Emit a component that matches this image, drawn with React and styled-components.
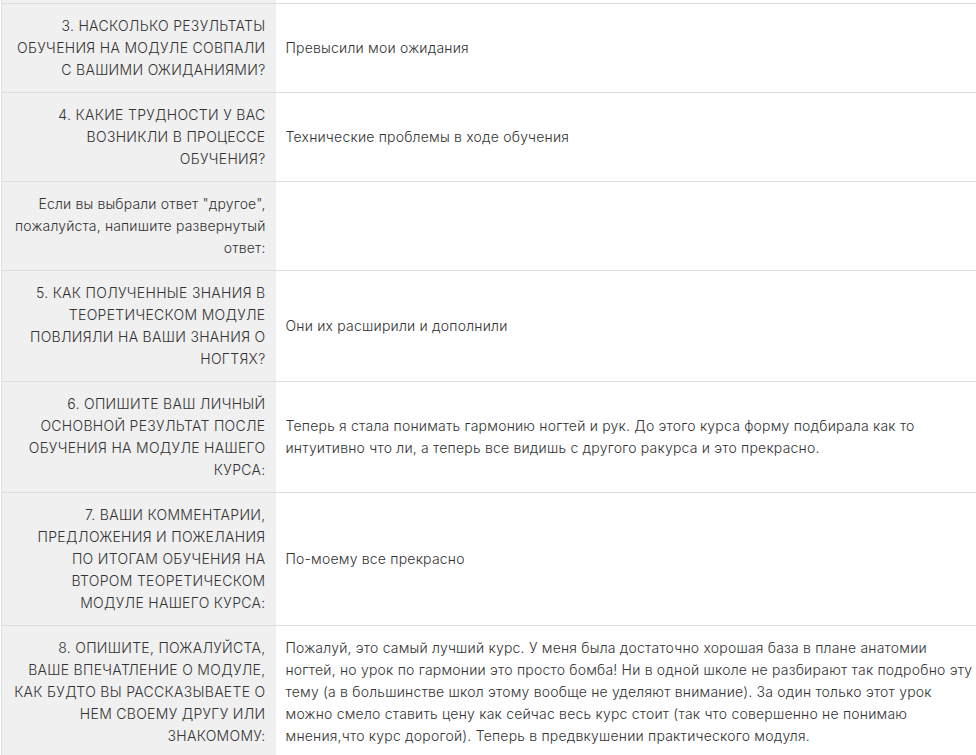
import React from 'react';
import styled, { createGlobalStyle } from 'styled-components';

const GlobalStyle = createGlobalStyle`
  html, body {
    margin: 0;
    padding: 0;
    background: #fff;
    overflow: hidden;
  }
  body {
    font-family: Inter, "Liberation Sans", sans-serif;
    color: #333;
  }
`;

const Page = styled.div`
  padding-left: 1px;
  width: 990px;
`;

const Table = styled.table`
  border-collapse: collapse;
  table-layout: fixed;
  width: 982px;
  border-left: 1px solid #dcdcdc;
  font-size: 14px;
  line-height: 22px;
  font-weight: 300;
  letter-spacing: 0.2px;
`;

const Row = styled.tr`
  border-bottom: 1px solid #dcdcdc;
`;

const Question = styled.td`
  width: 254px;
  padding: ${p => (p.$stub ? '0 10px' : '11px 10px')};
  height: ${p => (p.$stub ? '3px' : 'auto')};
  background: #f0f0f0;
  text-align: right;
  vertical-align: middle;
  letter-spacing: ${p => (p.$caps ? '0.3px' : '0.15px')};
  color: #333;
`;

const Answer = styled.td`
  padding: ${p => (p.$stub ? '0 10px' : '11px 10px')};
  vertical-align: middle;
  text-align: left;
  color: #333;
`;

const rows = [
  {
    q: ['3. НАСКОЛЬКО РЕЗУЛЬТАТЫ', 'ОБУЧЕНИЯ НА МОДУЛЕ СОВПАЛИ', 'С ВАШИМИ ОЖИДАНИЯМИ?'],
    a: 'Превысили мои ожидания',
  },
  {
    q: ['4. КАКИЕ ТРУДНОСТИ У ВАС', 'ВОЗНИКЛИ В ПРОЦЕССЕ', 'ОБУЧЕНИЯ?'],
    a: 'Технические проблемы в ходе обучения',
  },
  {
    q: ['Если вы выбрали ответ "другое",', 'пожалуйста, напишите развернутый', 'ответ:'],
    a: '',
    plain: true,
  },
  {
    q: ['5. КАК ПОЛУЧЕННЫЕ ЗНАНИЯ В', 'ТЕОРЕТИЧЕСКОМ МОДУЛЕ', 'ПОВЛИЯЛИ НА ВАШИ ЗНАНИЯ О', 'НОГТЯХ?'],
    a: 'Они их расширили и дополнили',
  },
  {
    q: ['6. ОПИШИТЕ ВАШ ЛИЧНЫЙ', 'ОСНОВНОЙ РЕЗУЛЬТАТ ПОСЛЕ', 'ОБУЧЕНИЯ НА МОДУЛЕ НАШЕГО', 'КУРСА:'],
    a: 'Теперь я стала понимать гармонию ногтей и рук. До этого курса форму подбирала как то интуитивно что ли, а теперь все видишь с другого ракурса и это прекрасно.',
  },
  {
    q: [
      '7. ВАШИ КОММЕНТАРИИ,',
      'ПРЕДЛОЖЕНИЯ И ПОЖЕЛАНИЯ',
      'ПО ИТОГАМ ОБУЧЕНИЯ НА',
      'ВТОРОМ ТЕОРЕТИЧЕСКОМ',
      'МОДУЛЕ НАШЕГО КУРСА:',
    ],
    a: 'По-моему все прекрасно',
  },
  {
    q: [
      '8. ОПИШИТЕ, ПОЖАЛУЙСТА,',
      'ВАШЕ ВПЕЧАТЛЕНИЕ О МОДУЛЕ,',
      'КАК БУДТО ВЫ РАССКАЗЫВАЕТЕ О',
      'НЕМ СВОЕМУ ДРУГУ ИЛИ',
      'ЗНАКОМОМУ:',
    ],
    a: 'Пожалуй, это самый лучший курс. У меня была достаточно хорошая база в плане анатомии ногтей, но урок по гармонии это просто бомба! Ни в одной школе не разбирают так подробно эту тему (а в большинстве школ этому вообще не уделяют внимание). За один только этот урок можно смело ставить цену как сейчас весь курс стоит (так что совершенно не понимаю мнения,что курс дорогой). Теперь в предвкушении практического модуля.',
  },
];

export default function App() {
  return (
    <>
      <GlobalStyle />
      <Page>
        <Table>
          <colgroup>
            <col style={{ width: 274 }} />
            <col />
          </colgroup>
          <tbody>
            <Row>
              <Question $stub />
              <Answer $stub />
            </Row>
            {rows.map((r, i) => (
              <Row key={i}>
                <Question $caps={!r.plain}>
                  {r.q.map((line, j) => (
                    <React.Fragment key={j}>
                      {j > 0 && <br />}
                      {line}
                    </React.Fragment>
                  ))}
                </Question>
                <Answer>{r.a}</Answer>
              </Row>
            ))}
          </tbody>
        </Table>
      </Page>
    </>
  );
}
